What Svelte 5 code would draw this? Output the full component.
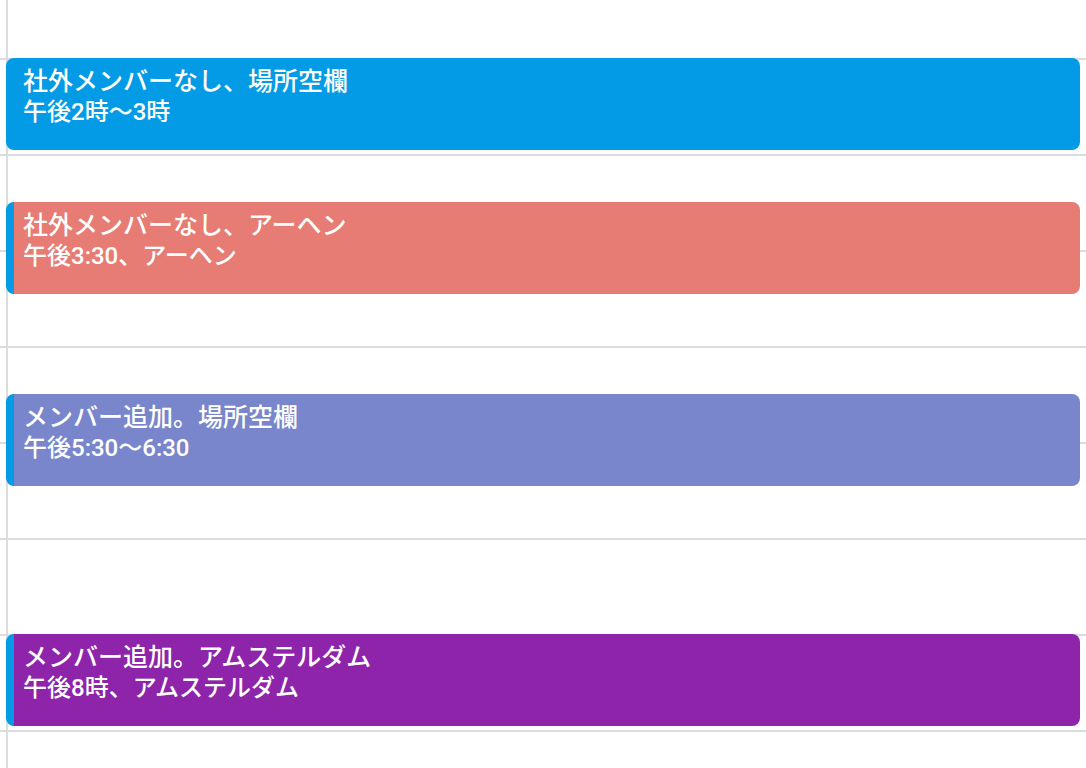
<script>
  const hours = ['13', '14', '15', '16', '17', '18', '19', '20'];
  const events = [
    { title: '社外メンバーなし、場所空欄', time: '午後2時〜3時', tone: 'sky', row: '2 / span 2' },
    { title: '社外メンバーなし、アーヘン', time: '午後3:30、アーヘン', tone: 'coral striped', row: '5 / span 2' },
    { title: 'メンバー追加。場所空欄', time: '午後5:30〜6:30', tone: 'lavender striped', row: '9 / span 2' },
    { title: 'メンバー追加。アムステルダム', time: '午後8時、アムステルダム', tone: 'grape striped', row: '14 / span 2' }
  ];
</script>

<main class="calendar">
  <div class="hours" aria-hidden="true">
    {#each hours as hour (hour)}
      <div class="hour"></div>
    {/each}
  </div>
  <div class="day">
    {#each events as event (event.title)}
      <button type="button" class="event {event.tone}" style="grid-row: {event.row}">
        <span class="title">{event.title}</span>
        <span class="time">{event.time}</span>
      </button>
    {/each}
  </div>
</main>

<style>
  :global(body) {
    margin: 0;
    background: #fff;
  }
  .calendar {
    display: grid;
    height: 100vh;
    overflow: hidden;
    font-family: Roboto, 'Noto Sans CJK JP', sans-serif;
  }
  .hours,
  .day {
    grid-area: 1 / 1;
    min-width: 0;
  }
  .hours {
    padding-top: 58px;
  }
  .hour {
    box-sizing: border-box;
    height: 96px;
    border-top: 2px solid #dadce0;
  }
  .day {
    display: grid;
    grid-template-rows: 58px repeat(15, 48px);
    margin-left: 6px;
    padding-right: 6px;
    border-left: 2px solid #dadce0;
  }
  .event {
    box-sizing: border-box;
    display: flex;
    flex-direction: column;
    align-items: flex-start;
    height: 92px;
    min-width: 0;
    margin: 0 0 0 -2px;
    padding: 9px 17px;
    border: 0;
    border-radius: 8px;
    color: #fff;
    font-family: inherit;
    font-size: 24px;
    font-weight: 500;
    line-height: 30px;
    text-align: left;
    white-space: nowrap;
    cursor: pointer;
    overflow: hidden;
  }
  .title {
    font-size: 25px;
  }
  .striped {
    padding-left: 9px;
    border-left: 8px solid #039be5;
  }
  .sky {
    background-color: #039be5;
  }
  .coral {
    background-color: #e67c73;
  }
  .lavender {
    background-color: #7986cb;
  }
  .grape {
    background-color: #8e24aa;
  }
</style>
